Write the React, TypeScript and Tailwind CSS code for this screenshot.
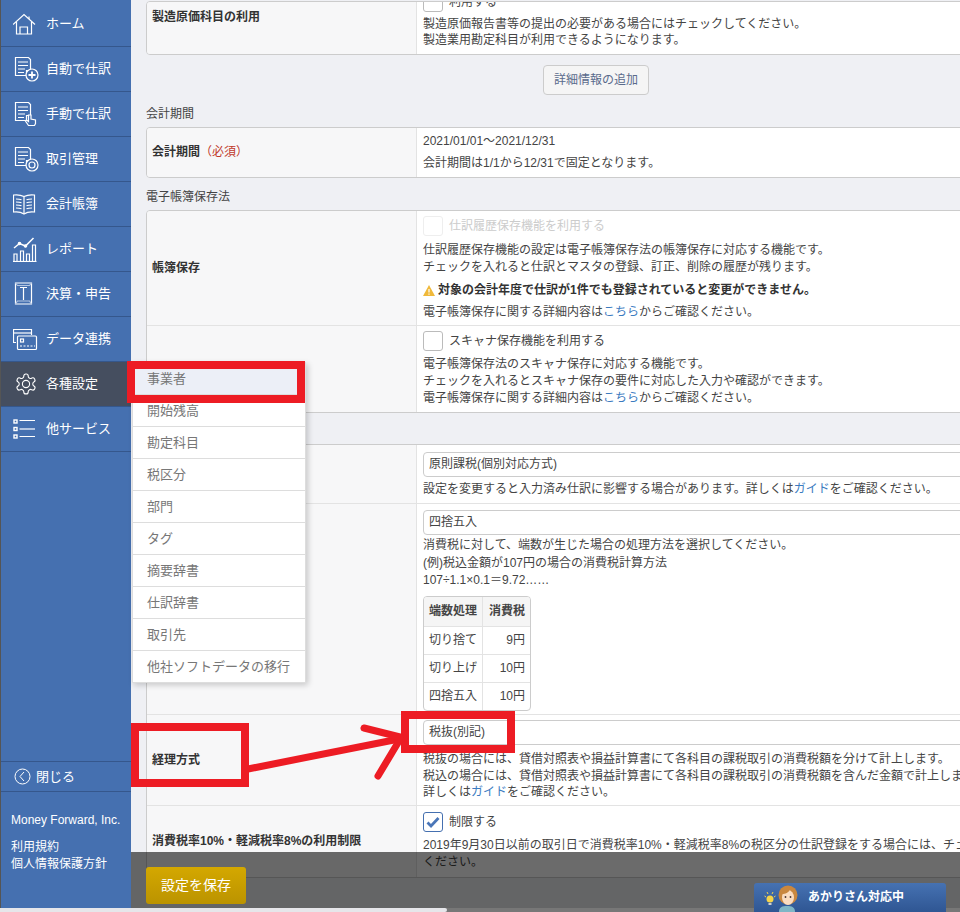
const font = { fontFamily: '"Liberation Sans", "Noto Sans CJK JP", sans-serif' };

const stroke = {
  fill: "none",
  stroke: "#fff",
  strokeWidth: 1.2,
} as const;

function Doc({ children }: { children?: React.ReactNode }) {
  return (
    <svg width="26" height="26" viewBox="0 0 26 26" {...stroke}>
      <path d="M2.500 1.500h13l2 2v11h-4v5h-11z" />
      <path d="M5 6h10M5 9.500h10M5 13h7M5 16.500h6" />
      {children}
    </svg>
  );
}

const icons: Record<string, React.ReactNode> = {
  home: (
    <svg width="26" height="26" viewBox="0 0 26 26" {...stroke}>
      <path d="M0 13.500 11 3.500l11 10" />
      <path d="M3.500 11v12h15V11" />
      <path d="M7 23v-7h7.500v7" />
      <path d="M16 5.500V8" />
    </svg>
  ),
  auto: (
    <Doc>
      <circle cx="19" cy="19" r="6" fill="#4570b0" />
      <path d="M19 15.500v7M15.500 19h7" strokeWidth="1.800" />
    </Doc>
  ),
  manual: (
    <Doc>
      <path
        d="M15.500 24.500l-3-4.500 1-1 2 1.500V14h2.500v4l4.500 1v3.500l-1 2z"
        fill="#4570b0"
      />
    </Doc>
  ),
  deal: (
    <Doc>
      <circle cx="19" cy="19" r="6" fill="#4570b0" />
      <circle cx="19" cy="19" r="3" />
    </Doc>
  ),
  book: (
    <svg width="26" height="26" viewBox="0 0 26 26" {...stroke}>
      <path d="M11 5.500C8 4 4 3.500.5 4v17c3.500-.5 7.500 0 10.500 2 3-2 7-2.500 10.500-2V4C18 3.500 14 4 11 5.500z" />
      <path d="M11 5.500V23" />
      <path d="M3 8c2 0 4 .2 5.500.8M3 11c2 0 4 .2 5.500.8M3 14c2 0 4 .2 5.500.8M3 17c2 0 4 .2 5.500.8" />
      <path d="M19 8c-2 0-4 .2-5.500.8M19 11c-2 0-4 .2-5.500.8M19 14c-2 0-4 .2-5.500.8M19 17c-2 0-4 .2-5.500.8" />
    </svg>
  ),
  report: (
    <svg width="26" height="26" viewBox="0 0 26 26" {...stroke}>
      <path d="M0 25.500h23.500" />
      <path d="M1 25v-7h3v7M7.500 25v-10h3v10M13.500 25v-7h3v7M19.500 25V9h3v16" />
      <path d="M1 12l5.500-4.500 6 2.500 8-8" strokeWidth="1.500" />
      <circle cx="6.500" cy="7.500" r="1.200" fill="#fff" />
      <circle cx="12.500" cy="10" r="1.200" fill="#fff" />
    </svg>
  ),
  tax: (
    <svg width="26" height="26" viewBox="0 0 26 26" {...stroke}>
      <path d="M2.500 2h16v21h-16z" />
      <path d="M2.500 2l2 2.500h12l2-2.500" stroke="#b4c6e2" />
      <path d="M7 6.500h7M10.500 6.500V19" />
      <path d="M2.500 23l2-3h12l2 3" stroke="#b4c6e2" />
    </svg>
  ),
  data: (
    <svg width="26" height="26" viewBox="0 0 26 26" {...stroke}>
      <path d="M3 16.500H.5v-13h18V9" />
      <path d="M.5 7h18" />
      <rect x="4.500" y="10" width="19" height="13.500" rx="1" fill="#4570b0" />
      <rect x="7.500" y="13" width="3" height="3" />
      <path d="M7 20h15" strokeDasharray="2 1.500" />
    </svg>
  ),
  gear: (
    <svg width="24" height="24" viewBox="0 0 24 24" {...stroke} strokeWidth="1.100">
      <path d="M12.200 2h-.4a2 2 0 0 0-2 2v.2a2 2 0 0 1-1 1.700l-.4.300a2 2 0 0 1-2 0l-.2-.1a2 2 0 0 0-2.700.7l-.2.400a2 2 0 0 0 .7 2.700l.2.100a2 2 0 0 1 1 1.700v.500a2 2 0 0 1-1 1.700l-.2.100a2 2 0 0 0-.7 2.700l.2.400a2 2 0 0 0 2.700.7l.2-.1a2 2 0 0 1 2 0l.4.300a2 2 0 0 1 1 1.700v.2a2 2 0 0 0 2 2h.4a2 2 0 0 0 2-2v-.2a2 2 0 0 1 1-1.700l.4-.3a2 2 0 0 1 2 0l.2.100a2 2 0 0 0 2.700-.7l.2-.4a2 2 0 0 0-.7-2.700l-.2-.1a2 2 0 0 1-1-1.700v-.500a2 2 0 0 1 1-1.700l.2-.1a2 2 0 0 0 .7-2.700l-.2-.4a2 2 0 0 0-2.700-.7l-.2.100a2 2 0 0 1-2 0l-.4-.3a2 2 0 0 1-1-1.700V4a2 2 0 0 0-2-2z" />
      <circle cx="12" cy="12" r="3.600" />
    </svg>
  ),
  other: (
    <svg width="26" height="26" viewBox="0 0 26 26" {...stroke}>
      <rect x="1" y="4" width="3" height="3" strokeWidth="1.400" />
      <rect x="1" y="11.500" width="3" height="3" strokeWidth="1.400" />
      <rect x="1" y="19" width="3" height="3" strokeWidth="1.400" />
      <path d="M6.500 4.500h15.500M6.500 20.500h15.500" />
      <path d="M6.500 13h15.500" stroke="#b4c6e2" strokeWidth="2" />
    </svg>
  ),
};

const navItems = [
  { icon: "home", label: "ホーム" },
  { icon: "auto", label: "自動で仕訳" },
  { icon: "manual", label: "手動で仕訳" },
  { icon: "deal", label: "取引管理" },
  { icon: "book", label: "会計帳簿" },
  { icon: "report", label: "レポート" },
  { icon: "tax", label: "決算・申告" },
  { icon: "data", label: "データ連携" },
  { icon: "gear", label: "各種設定", active: true },
  { icon: "other", label: "他サービス" },
];

const menuItems = [
  "事業者",
  "開始残高",
  "勘定科目",
  "税区分",
  "部門",
  "タグ",
  "摘要辞書",
  "仕訳辞書",
  "取引先",
  "他社ソフトデータの移行",
];

function Sidebar() {
  return (
    <aside className="w-[131px] h-[908px] shrink-0 bg-[#4570b0] border-l border-[#555] flex flex-col text-white pt-[2px] text-[13px]">
      {navItems.map((item) => (
        <div
          key={item.label}
          className={
            item.active
              ? "h-[45px] flex items-center pl-[12px] gap-[7px] border-b border-[#35578c] bg-[#454e5f]"
              : "h-[45px] flex items-center pl-[12px] gap-[7px] border-b border-[#35578c]"
          }
        >
          <span className="w-[26px] h-[26px] shrink-0 flex items-center justify-center">
            {icons[item.icon]}
          </span>
          <span>{item.label}</span>
        </div>
      ))}
      <div className="mt-auto border-t border-b border-[#35578c] h-[31px] flex items-center pl-[13px] gap-[5px]">
        <svg width="17" height="17" viewBox="0 0 17 17" fill="none" stroke="#fff" strokeWidth="1">
          <circle cx="8.500" cy="8.500" r="7.500" />
          <path d="M10 4l-4 4.500 4 4.500" />
        </svg>
        <span>閉じる</span>
      </div>
      <div className="h-[116px] pl-[10px] pt-[20px] text-[12px] leading-[17px]">
        <p>Money Forward, Inc.</p>
        <p className="mt-[10px]">利用規約</p>
        <p>個人情報保護方針</p>
      </div>
    </aside>
  );
}

function Flyout() {
  return (
    <div className="absolute left-[132px] top-[362px] w-[174px] bg-white border-x border-b border-[#ddd] shadow-[2px_2px_6px_rgba(0,0,0,0.2)] text-[13px] text-[#777]">
      {menuItems.map((item, i) => (
        <div
          key={item}
          className={
            i === 0
              ? "h-[32px] pl-[14px] pt-[7px] bg-[#eceff7]"
              : "h-[32px] pl-[14px] flex items-center border-t border-[#ddd]"
          }
        >
          {item}
        </div>
      ))}
    </div>
  );
}

function Row({
  label,
  h,
  required,
  children,
  labelAlign,
}: {
  label?: string;
  h: string;
  required?: boolean;
  children: React.ReactNode;
  labelAlign?: string;
}) {
  return (
    <div className={`flex border-t border-[#e3e3e3] first:border-t-0 ${h}`}>
      <div
        className={`w-[270px] shrink-0 bg-[#f7f7f8] border-r border-[#e3e3e3] flex pl-[5px] font-bold text-[#333] ${
          labelAlign ?? "items-center"
        }`}
      >
        {label}
        {required && <span className="text-[#c0392b] font-normal">（必須）</span>}
      </div>
      <div className="flex-1 min-w-0 bg-white pl-[6px] whitespace-nowrap overflow-hidden">
        {children}
      </div>
    </div>
  );
}

function Table({ children }: { children: React.ReactNode }) {
  return (
    <div className="w-[830px] border border-[#ccc] rounded-[4px] overflow-hidden">
      {children}
    </div>
  );
}

function Select({ value, top }: { value: string; top: string }) {
  return (
    <div
      className={`h-[25px] w-[600px] border border-[#ccc] rounded-[4px] pl-[5px] flex items-center bg-white ${top}`}
    >
      {value}
    </div>
  );
}

function Check({ label, disabled, checked }: { label: string; disabled?: boolean; checked?: boolean }) {
  return (
    <div className="flex items-center gap-[6px]">
      <span
        className={
          checked
            ? "w-[20px] h-[20px] rounded-[3px] border border-[#4570b0] flex items-center justify-center bg-white"
            : disabled
              ? "w-[20px] h-[20px] rounded-[3px] border border-[#eee] bg-white"
              : "w-[20px] h-[20px] rounded-[3px] border border-[#bbb] bg-white"
        }
      >
        {checked && (
          <svg width="14" height="12" viewBox="0 0 14 12">
            <path d="M1.500 6.500l3.500 3.500 7.500-8" fill="none" stroke="#4a76b8" strokeWidth="2.800" />
          </svg>
        )}
      </span>
      <span className={disabled ? "text-[#ccc]" : ""}>{label}</span>
    </div>
  );
}

const Link = ({ children }: { children: React.ReactNode }) => (
  <span className="text-[#3b7bbf]">{children}</span>
);

function RoundTable() {
  const rows = [
    ["切り捨て", "9円"],
    ["切り上げ", "10円"],
    ["四捨五入", "10円"],
  ];
  return (
    <div className="mt-[6px] w-[108px] border border-[#ccc] rounded-[4px] overflow-hidden">
      <div className="flex h-[29px] bg-[#f5f5f5] font-bold items-center">
        <div className="w-[59px] h-full pl-[5px] flex items-center border-r border-[#e3e3e3]">端数処理</div>
        <div className="flex-1 text-right pr-[5px]">消費税</div>
      </div>
      {rows.map(([a, b]) => (
        <div key={a} className="flex h-[28px] items-center border-t border-[#e3e3e3]">
          <div className="w-[59px] h-full pl-[5px] flex items-center border-r border-[#e3e3e3]">{a}</div>
          <div className="flex-1 text-right pr-[5px]">{b}</div>
        </div>
      ))}
    </div>
  );
}

function Content() {
  return (
    <main className="flex-1 min-w-0 bg-[#eff0f4] pl-[15px] pt-[1px] h-[912px] overflow-hidden text-[12px] leading-[17px] text-[#444]">
      <Table>
        <Row label="製造原価科目の利用" h="h-[52px]" labelAlign="items-start pt-[7px]">
          <div className="-mt-[10px] mb-[4px]">
            <Check label="利用する" />
          </div>
          <p className="leading-[16px]">製造原価報告書等の提出の必要がある場合にはチェックしてください。</p>
          <p className="leading-[16px]">製造業用勘定科目が利用できるようになります。</p>
        </Row>
      </Table>
      <div className="h-[51px] pt-[10px] pl-[397px]">
        <button className="w-[106px] h-[30px] border border-[#ccc] rounded-[4px] bg-[#f5f5f5] text-[#5a6b8c]">
          詳細情報の追加
        </button>
      </div>
      <h2 className="h-[21px] text-[#444]">会計期間</h2>
      <Table>
        <Row label="会計期間" required h="h-[49px]">
          <p className="mt-[5px]">2021/01/01〜2021/12/31</p>
          <p className="mt-[5px]">会計期間は1/1から12/31で固定となります。</p>
        </Row>
      </Table>
      <h2 className="h-[32px] pt-[11px] text-[#444]">電子帳簿保存法</h2>
      <Table>
        <Row label="帳簿保存" h="h-[114px]">
          <div className="mt-[5px] mb-[6px]">
            <Check label="仕訳履歴保存機能を利用する" disabled />
          </div>
          <p>仕訳履歴保存機能の設定は電子帳簿保存法の帳簿保存に対応する機能です。</p>
          <p>チェックを入れると仕訳とマスタの登録、訂正、削除の履歴が残ります。</p>
          <p className="mt-[6px] font-bold flex items-center gap-[3px] text-[#333]">
            <svg width="12" height="11" viewBox="0 0 12 11">
              <path d="M6 0l6 11H0z" fill="#f0b93a" />
              <path d="M6 4v3.500M6 8.500v1.200" stroke="#fff" strokeWidth="1.200" />
            </svg>
            対象の会計年度で仕訳が1件でも登録されていると変更ができません。
          </p>
          <p className="mt-[5px]">
            電子帳簿保存に関する詳細内容は<Link>こちら</Link>からご確認ください。
          </p>
        </Row>
        <Row h="h-[87px]">
          <div className="mt-[5px] mb-[5px]">
            <Check label="スキャナ保存機能を利用する" />
          </div>
          <p>電子帳簿保存法のスキャナ保存に対応する機能です。</p>
          <p>チェックを入れるとスキャナ保存の要件に対応した入力や確認ができます。</p>
          <p>
            電子帳簿保存に関する詳細内容は<Link>こちら</Link>からご確認ください。
          </p>
        </Row>
      </Table>
      <div className="h-[31px]" />
      <Table>
        <Row h="h-[58px]">
          <Select value="原則課税(個別対応方式)" top="mt-[7px] mb-[4px]" />
          <p>
            設定を変更すると入力済み仕訳に影響する場合があります。詳しくは<Link>ガイド</Link>をご確認ください。
          </p>
        </Row>
        <Row h="h-[211px]">
          <Select value="四捨五入" top="mt-[6px] mb-[2px]" />
          <p className="leading-[17.500px]">消費税に対して、端数が生じた場合の処理方法を選択してください。</p>
          <p className="leading-[17.500px]">(例)税込金額が107円の場合の消費税計算方法</p>
          <p className="leading-[17.500px]">107÷1.1×0.1＝9.72……</p>
          <RoundTable />
        </Row>
        <Row label="経理方式" h="h-[91px]">
          <Select value="税抜(別記)" top="mt-[5px] mb-[6px]" />
          <p className="leading-[16.500px]">税抜の場合には、貸借対照表や損益計算書にて各科目の課税取引の消費税額を分けて計上します。</p>
          <p className="leading-[16.500px]">税込の場合には、貸借対照表や損益計算書にて各科目の課税取引の消費税額を含んだ金額で計上します。</p>
          <p className="leading-[16.500px]">
            詳しくは<Link>ガイド</Link>をご確認ください。
          </p>
        </Row>
        <Row label="消費税率10%・軽減税率8%の利用制限" h="h-[72px]">
          <div className="mt-[6px] mb-[5px]">
            <Check label="制限する" checked />
          </div>
          <p>2019年9月30日以前の取引日で消費税率10%・軽減税率8%の税区分の仕訳登録をする場合には、チェックを外して</p>
          <p>ください。</p>
        </Row>
      </Table>
    </main>
  );
}

function Annotations() {
  return (
    <>
      <div className="absolute left-[127px] top-[361px] w-[178px] h-[42px] border-[8px] border-[#ed1c24]" />
      <div className="absolute left-[131px] top-[723px] w-[118px] h-[64px] border-[8px] border-[#ed1c24]" />
      <div className="absolute left-[401px] top-[711px] w-[114px] h-[42px] border-[8px] border-[#ed1c24]" />
      <svg className="absolute left-[240px] top-[715px]" width="180" height="80" viewBox="240 715 180 80" fill="none" stroke="#ed1c24">
        <path d="M248 769 404 738" strokeWidth="7" />
        <path d="M364 728 400 737M378 776 399 741" strokeWidth="7" strokeLinecap="round" />
      </svg>
    </>
  );
}

function SaveBar() {
  return (
    <div className="absolute left-[131px] right-0 top-[852px] h-[56px] bg-[rgba(0,0,0,0.58)]">
      <button className="absolute left-[15px] top-[15px] w-[100px] h-[37px] rounded-[3px] bg-gradient-to-b from-[#d4a800] to-[#bb9300] text-white text-[14px]">
        設定を保存
      </button>
    </div>
  );
}

function Chat() {
  return (
    <div className="absolute left-[754px] top-[883px] w-[192px] h-[29px] rounded-t-[3px] bg-gradient-to-b from-[#4672b2] to-[#2f5693] flex text-white text-[12px] font-bold overflow-hidden">
      <svg className="ml-[10px] mt-[2px]" width="36" height="27" viewBox="0 0 36 27">
        <circle cx="6" cy="14" r="3.500" fill="#f6d44a" />
        <path d="M4.500 18h3v2h-3z" fill="#cfcfcf" />
        <path d="M3 7l1 2M9 7l-1 2M.5 11l1.500 1M11.500 11 10 12" stroke="#f6d44a" />
        <path d="M15 27c0-5 3-6 8-6s8 1 8 6z" fill="#7fb6c6" />
        <circle cx="24" cy="10" r="9.500" fill="#c9873f" />
        <ellipse cx="24" cy="12.500" rx="6" ry="7.500" fill="#fbdcc0" />
        <path d="M18 9c3 0 7-1 8-5 2 2 4 3 4 6l-1-7-8-1-5 4z" fill="#c9873f" />
        <circle cx="21.500" cy="12" r=".9" fill="#433" />
        <circle cx="26.500" cy="12" r=".9" fill="#433" />
      </svg>
      <span className="ml-[8px] mt-[5px]">あかりさん対応中</span>
    </div>
  );
}

export default function App() {
  return (
    <div className="relative w-[960px] h-[912px] overflow-hidden flex bg-[#eff0f4]" style={font}>
      <Sidebar />
      <Content />
      <Flyout />
      <SaveBar />
      <Annotations />
      <div className="absolute left-0 top-[908px] w-full h-[4px] bg-[#777]">
        <div className="w-[447px] h-full bg-[#e6e6ea] rounded-r-[3px]" />
      </div>
      <Chat />
    </div>
  );
}
